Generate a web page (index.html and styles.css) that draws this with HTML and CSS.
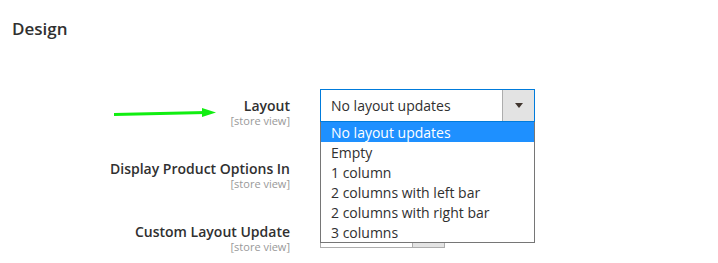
FILE: index.html
```html
<!DOCTYPE html>
<html>
<head>
<meta charset="utf-8">
<link rel="stylesheet" href="styles.css">
</head>
<body>
<div class="page">
  <h2 class="title">Design</h2>
  <div class="fields">
    <div class="field">
      <svg class="pointer" width="110" height="14" viewBox="0 0 110 14">
        <line x1="0" y1="8.5" x2="92" y2="6.5" stroke="#11ee11" stroke-width="3"/>
        <polygon points="88,2 102,6.5 88,11" fill="#11ee11"/>
      </svg>
      <div class="label-col">
        <span class="label">Layout</span>
        <span class="scope">[store view]</span>
      </div>
      <div class="control">
        <div class="select open">
          <span class="value">No layout updates</span>
          <span class="btn"><span class="tri"></span></span>
        </div>
        <ul class="dropdown">
          <li class="active">No layout updates</li>
          <li>Empty</li>
          <li>1 column</li>
          <li>2 columns with left bar</li>
          <li>2 columns with right bar</li>
          <li>3 columns</li>
        </ul>
      </div>
    </div>
    <div class="field">
      <div class="label-col">
        <span class="label">Display Product Options In</span>
        <span class="scope">[store view]</span>
      </div>
      <div class="control">
        <div class="select">
          <span class="value"></span>
          <span class="btn"><span class="tri"></span></span>
        </div>
      </div>
    </div>
    <div class="field">
      <div class="label-col">
        <span class="label">Custom Layout Update</span>
        <span class="scope">[store view]</span>
      </div>
      <div class="control">
        <div class="select small">
          <span class="value"></span>
          <span class="btn"><span class="tri"></span></span>
        </div>
      </div>
    </div>
  </div>
</div>
</body>
</html>
```
FILE: styles.css
```css
* { box-sizing: border-box; }
html, body { margin: 0; padding: 0; background: #fff; }
body {
  font-family: "Open Sans", "DejaVu Sans", sans-serif;
  color: #303030;
  width: 718px;
  height: 263px;
  overflow: hidden;
}
.page { padding: 0 0 0 12px; }
.title {
  margin: 17px 0 0 0;
  font-size: 17px;
  line-height: 24px;
  font-weight: 600;
  color: #303030;
}
.fields {
  margin-top: 48px;
  display: flex;
  flex-direction: column;
  gap: 30px;
}
.field {
  position: relative;
  display: flex;
  align-items: flex-start;
  gap: 30px;
  height: 33px;
}
.pointer {
  position: absolute;
  left: 102px;
  top: 17px;
}
.label-col {
  width: 278px;
  display: flex;
  flex-direction: column;
  align-items: flex-end;
  padding-top: 8px;
}
.label {
  font-size: 14px;
  line-height: 17px;
  font-weight: 600;
  color: #303030;
}
.scope {
  font-size: 11px;
  line-height: 13px;
  color: #999;
}
.control { position: relative; }
.select {
  width: 215px;
  height: 33px;
  border: 1px solid #adadad;
  background: #fff;
  display: flex;
  align-items: center;
  font-size: 14px;
  color: #303030;
}
.select.open { border-color: #007bdb; }
.select.small { width: 125px; }
.value {
  flex: 1;
  padding-left: 10px;
  line-height: 19px;
  min-height: 19px;
  white-space: nowrap;
  overflow: hidden;
}
.btn {
  width: 32px;
  align-self: stretch;
  background: #e3e3e3;
  border-left: 1px solid #adadad;
  display: flex;
  align-items: center;
  justify-content: center;
}
.tri {
  width: 0;
  height: 0;
  border-left: 4px solid transparent;
  border-right: 4px solid transparent;
  border-top: 5px solid #41362f;
}
.dropdown {
  position: absolute;
  left: 0;
  top: 33px;
  width: 215px;
  margin: 0;
  padding: 0;
  list-style: none;
  background: #fff;
  border: 1px solid #767676;
  border-top: none;
  z-index: 5;
}
.dropdown li {
  height: 20px;
  line-height: 20px;
  padding: 1px 0 0 10px;
  font-size: 14px;
  color: #303030;
  white-space: nowrap;
}
.dropdown li.active {
  background: #1e90ff;
  color: #fff;
}
```
